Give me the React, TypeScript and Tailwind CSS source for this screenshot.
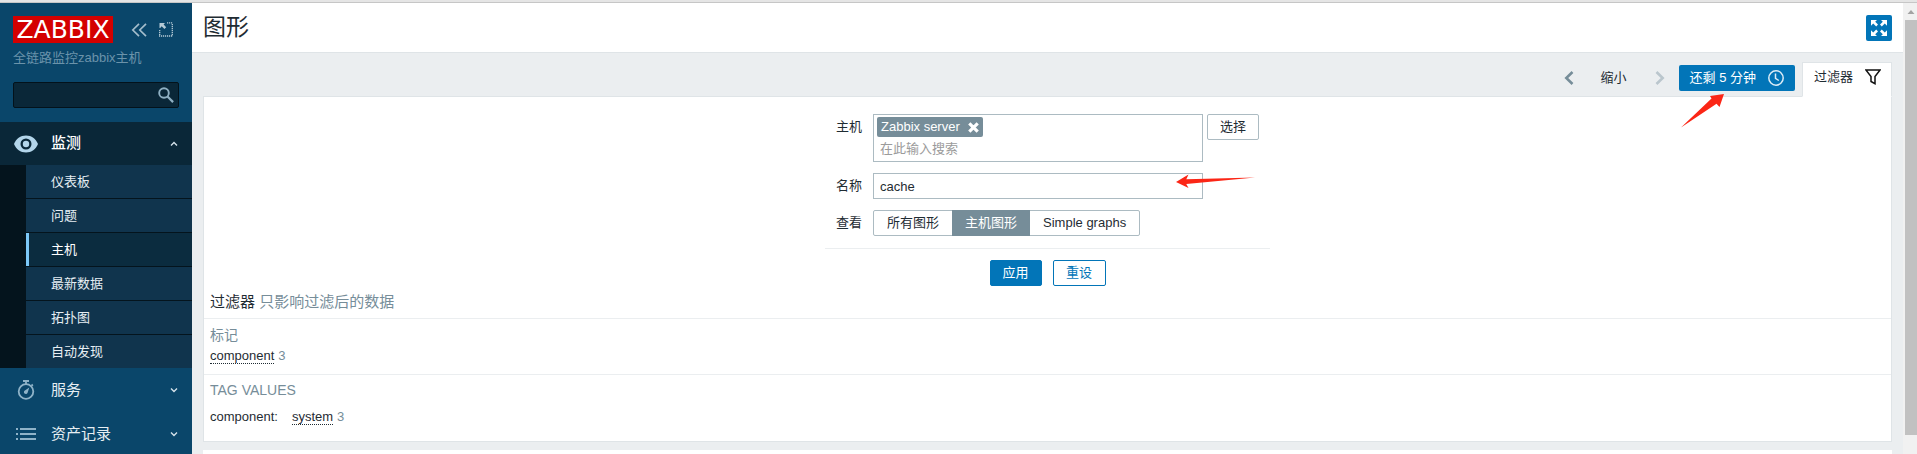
import React, { useState } from "react";

const subItems = ["仪表板", "问题", "主机", "最新数据", "拓扑图", "自动发现"];
const views = ["所有图形", "主机图形", "Simple graphs"];

function Chevron({ up = false }: { up?: boolean }) {
  return (
    <svg className="ml-auto h-2 w-2 shrink-0" viewBox="0 0 8 8" fill="none" stroke="#d5e2ea" strokeWidth="1.4">
      <path d={up ? "M1 5.6 4 2.6 7 5.6" : "M1 2.6 4 5.6 7 2.6"} />
    </svg>
  );
}

function MenuItem({ icon, label }: { icon: React.ReactNode; label: string }) {
  return (
    <li>
      <a href="#" className="flex h-11 items-center pr-[14px] text-[15px] text-[#e6eef3]">
        <span className="flex w-[51px] shrink-0 justify-center">{icon}</span>
        {label}
        <Chevron />
      </a>
    </li>
  );
}

function Sidebar() {
  return (
    <aside className="flex w-48 shrink-0 flex-col overflow-hidden bg-[#0a466a]">
      <div className="flex shrink-0 items-start px-[13px] pt-[13px]">
        <a href="#" className="flex h-[27px] w-[100px] items-center justify-center bg-[#d40000] font-[DejaVu_Sans,sans-serif] text-[25px] leading-none text-white">
          ZABBIX
        </a>
        <button aria-label="收起侧边栏" className="mt-[7px] ml-[18px]">
          <svg className="h-[14px] w-4" viewBox="0 0 16 14" fill="none" stroke="#a3bccb" strokeWidth="1.7">
            <path d="M8 .8 1.8 7 8 13.2M15 .8 8.8 7l6.2 6.2" />
          </svg>
        </button>
        <button aria-label="隐藏侧边栏" className="mt-[6px] ml-[12px]">
          <svg className="h-[15px] w-[14px]" viewBox="0 0 14 15" fill="none">
            <path d="M8 .9H14M13.300 2v12M0 14h14M.7 13V8" stroke="#b5cad6" strokeWidth="1.3" strokeDasharray="1.2 .8" />
            <path d="M.5 1h5.500L4.600 2.500 7.200 5.200 5.400 7 2.700 4.300 1.200 6 .5 6z" fill="#b5cad6" />
          </svg>
        </button>
      </div>
      <div className="mt-[5px] shrink-0 px-[13px] text-[13px] leading-5 text-[#6b93aa]">全链路监控zabbix主机</div>
      <form className="mx-[13px] mt-[14px] flex h-[26px] shrink-0 items-center rounded-[2px] border border-[#03121b] bg-[#0a2738] pr-1">
        <input type="text" aria-label="搜索" className="min-w-0 flex-1 bg-transparent px-1 text-[13px] text-white outline-none" />
        <button aria-label="搜索" type="button">
          <svg className="h-4 w-4" viewBox="0 0 16 16" fill="none" stroke="#8fb0c3">
            <circle cx="6" cy="6" r="4.800" strokeWidth="1.900" />
            <path d="m9.500 9.500 5.600 5.600" strokeWidth="2.200" />
          </svg>
        </button>
      </form>
      <ul className="mt-[14px]">
        <li>
          <a href="#" className="flex h-[43px] items-center bg-[#0a2738] pr-[14px] text-[15px] font-medium text-white">
            <span className="flex w-[51px] shrink-0 pl-[14px]">
              <svg className="h-[18px] w-6" viewBox="0 0 24 18">
                <path fillRule="evenodd" fill="#b3d5ea" d="M12 .5C6.500.5 2 3.900 0 9c2 5.100 6.500 8.500 12 8.500S22 14.100 24 9C22 3.900 17.500.5 12 .5Zm0 14A5.500 5.500 0 1 1 12 3.500a5.500 5.500 0 0 1 0 11Z" />
                <circle cx="12" cy="9" r="3.200" fill="#b3d5ea" />
              </svg>
            </span>
            监测
            <Chevron up />
          </a>
          <ul className="flex flex-col gap-px bg-[#04141d] pl-[26px]">
            {subItems.map((s) => (
              <li key={s}>
                <a
                  href="#"
                  className={
                    "flex h-[33px] items-center pl-[22px] text-[13px] " +
                    (s === "主机"
                      ? "border-l-[3px] border-[#7cc8f8] bg-[#0b2c3f] text-white"
                      : "border-l-[3px] border-[#10344d] bg-[#10344d] text-[#e6eef3]")
                  }
                >
                  {s}
                </a>
              </li>
            ))}
          </ul>
        </li>
        <MenuItem
          label="服务"
          icon={
            <svg className="h-5 w-[18px]" viewBox="0 0 18 20" fill="none" stroke="#8fb3c8">
              <circle cx="9" cy="11.500" r="7.300" strokeWidth="1.800" />
              <path d="M6 1h6M9 1v3M14.500 4.500l1.300 1.300" strokeWidth="1.800" />
              <path d="M12.300 7.600 10.600 12.800a1.900 1.900 0 1 1-2.700-2.300Z" fill="#8fb3c8" stroke="none" />
            </svg>
          }
        />
        <MenuItem
          label="资产记录"
          icon={
            <svg className="h-3 w-5" viewBox="0 0 20 12" fill="#8fb3c8">
              <path d="M0 0h2v2H0zM4 0h16v2H4zM0 5h2v2H0zM4 5h16v2H4zM0 10h2v2H0zM4 10h16v2H4z" />
            </svg>
          }
        />
      </ul>
    </aside>
  );
}

function PageHeader() {
  return (
    <header className="flex h-[50px] shrink-0 items-center justify-between border-b border-[#dfe4e7] bg-white px-[11px]">
      <h1 className="text-[23px] leading-none">图形</h1>
      <button aria-label="全屏" className="flex h-[26px] w-[26px] items-center justify-center rounded-[2px] bg-[#0275b8]">
        <svg className="h-4 w-4" viewBox="0 0 16 16" fill="#fff">
          <path d="M0 0h6L4.200 1.800 7 4.600 5.200 6.400 2.200 3.600 0 5.800z" />
          <path d="M16 0h-6l1.800 1.800L9 4.600l1.800 1.800 3-2.800L16 5.800z" />
          <path d="M0 16h6l-1.800-1.800L7 11.400 5.200 9.600l-3 2.800L0 10.200z" />
          <path d="M16 16h-6l1.800-1.800L9 11.400l1.800-1.800 3 2.800 2.200-2.200z" />
        </svg>
      </button>
    </header>
  );
}

function TimeBar() {
  return (
    <div className="flex items-end justify-end pt-[9px]">
      <div className="mb-[5px] flex items-center">
        <button aria-label="后退">
          <svg className="h-[14px] w-[10px]" viewBox="0 0 10 14" fill="none" stroke="#768d99" strokeWidth="2.600">
            <path d="M8.500 1 2.300 7l6.200 6" />
          </svg>
        </button>
        <button className="ml-[27px] text-[13px]">缩小</button>
        <button aria-label="前进" className="ml-7">
          <svg className="h-[14px] w-[10px]" viewBox="0 0 10 14" fill="none" stroke="#bac6cd" strokeWidth="2.600">
            <path d="M1.500 1 7.700 7l-6.200 6" />
          </svg>
        </button>
        <div className="relative ml-[14px]">
          <button className="flex h-[26px] items-center gap-3 rounded-[2px] bg-[#0275b8] px-[11px] text-[13px] text-white">
            还剩 5 分钟
            <svg className="h-4 w-4" viewBox="0 0 16 16" fill="none" stroke="#dcecf6" strokeWidth="1.500">
              <circle cx="8" cy="8" r="7.200" />
              <path d="M7.500 3.500V8.300l3.300 2.200" />
            </svg>
          </button>
          <svg className="pointer-events-none absolute top-[29px] left-[2px] h-[34px] w-11" viewBox="0 0 44 34" fill="#fb2616">
            <path d="M0 33.500 30.500 4.600 29 2 43 0 38.500 13 35.500 9.800Z" />
          </svg>
        </div>
      </div>
      <button className="relative -mb-px ml-[7px] flex h-[35px] items-center gap-3 border border-[#dfe4e7] border-b-white bg-white pr-[10px] pb-[6px] pl-[11px] text-[13px]">
        过滤器
        <svg className="h-4 w-4" viewBox="0 0 16 16" fill="none" stroke="#111" strokeWidth="1.500">
          <path d="M.9 1h14.200L10 7.500v7.200L6 12.500V7.500Z" />
        </svg>
      </button>
    </div>
  );
}

function FilterForm() {
  const [view, setView] = useState("主机图形");
  const label = "w-[37px] shrink-0 text-right leading-[26px]";
  return (
    <form className="mx-auto w-[445px] text-[13px]">
      <div className="flex flex-col gap-[11px] border-b border-[#ebeef0] pt-[17px] pb-3">
        <div className="flex items-start gap-[11px]">
          <label htmlFor="host" className={label}>主机</label>
          <div className="flex gap-1">
            <div className="h-12 w-[330px] border border-[#acbbc2] px-[3px] pt-[2px]">
              <span className="flex h-5 w-max items-center gap-2 rounded-[2px] bg-[#768d99] px-1 text-white">
                Zabbix server
                <button type="button" aria-label="移除">
                  <svg className="h-[11px] w-[11px]" viewBox="0 0 11 11" stroke="#fff" strokeWidth="3.200">
                    <path d="m1.300 1.300 8.400 8.400M9.700 1.300 1.300 9.700" />
                  </svg>
                </button>
              </span>
              <input id="host" type="text" placeholder="在此输入搜索" className="block h-[22px] w-full px-[3px] outline-none placeholder:text-[#9b9b9b]" />
            </div>
            <button type="button" className="h-[26px] w-[52px] rounded-[2px] border border-[#acbbc2] bg-white">选择</button>
          </div>
        </div>
        <div className="flex gap-[11px]">
          <label htmlFor="name" className={label}>名称</label>
          <div className="relative">
            <input id="name" type="text" defaultValue="cache" className="block h-[26px] w-[330px] border border-[#acbbc2] px-[6px] outline-none" />
            <svg className="pointer-events-none absolute top-px left-[303px] h-[14px] w-20" viewBox="0 0 80 14" fill="#fb2616">
              <path d="M0 8 12.500.6 10.300 5.200 79 3.500 10.300 10 12.500 14Z" />
            </svg>
          </div>
        </div>
        <div className="flex gap-[11px]" role="group" aria-label="查看">
          <span className={label}>查看</span>
          <div className="flex h-[26px] items-stretch rounded-[2px] border border-[#acbbc2]">
            {views.map((v) => (
              <label
                key={v}
                className={
                  "flex items-center px-[13px] " + (v === view ? "-my-px bg-[#768d99] text-white" : "")
                }
              >
                <input type="radio" name="view" checked={v === view} onChange={() => setView(v)} className="sr-only" />
                {v}
              </label>
            ))}
          </div>
        </div>
      </div>
      <div className="flex justify-center gap-[11px] pt-[11px]">
        <button type="button" className="h-[26px] w-[52px] rounded-[2px] border border-[#0275b8] bg-[#0275b8] text-white">应用</button>
        <button type="reset" className="h-[26px] w-[53px] rounded-[2px] border border-[#0275b8] bg-white text-[#0275b8]">重设</button>
      </div>
    </form>
  );
}

function Tag({ name, count }: { name: string; count: number }) {
  return (
    <span className="flex gap-1 leading-[15px] text-[#768d99]">
      <a href="#" className="border-b border-dotted border-[#1f2c33] text-[#1f2c33]">{name}</a>
      {count}
    </span>
  );
}

function Subfilter() {
  return (
    <section className="text-[13px]">
      <h3 className="px-[6px] pt-[5px] pb-[5px] text-[15px] leading-[22px]">
        过滤器 <span className="text-[#768d99]">只影响过滤后的数据</span>
      </h3>
      <div className="border-t border-[#ebeef0] px-[6px] pt-[6px] pb-[10px]">
        <h4 className="text-[14px] leading-5 text-[#768d99]">标记</h4>
        <div className="mt-[3px] flex"><Tag name="component" count={3} /></div>
      </div>
      <div className="border-t border-[#ebeef0] px-[6px] pt-[5px] pb-4">
        <h4 className="text-[14px] leading-5 text-[#768d99]">TAG VALUES</h4>
        <div className="mt-[9px] flex gap-[14px]">
          <span className="leading-[15px]">component:</span>
          <Tag name="system" count={3} />
        </div>
      </div>
    </section>
  );
}

export default function App() {
  return (
    <div className="flex h-screen flex-col overflow-hidden bg-[#ebeef0] font-[Liberation_Sans,Noto_Sans_CJK_SC,sans-serif] text-[#1f2c33]">
      <div className="h-[3px] shrink-0 border-b border-[#c6c6c6] bg-[#e5e5e5]" />
      <div className="flex min-h-0 flex-1">
        <Sidebar />
        <div className="flex min-w-0 flex-1 flex-col">
          <PageHeader />
          <main className="min-h-0 flex-1 overflow-hidden px-[11px]">
            <TimeBar />
            <div className="border border-[#dfe4e7] bg-white">
              <FilterForm />
              <Subfilter />
            </div>
            <div className="mt-2 h-10 bg-white" />
          </main>
        </div>
        <div className="flex w-[14px] shrink-0 flex-col bg-[#f1f1f1] pb-[19px] pl-[2px]" aria-hidden="true">
          <svg className="h-[17px] w-3 shrink-0" viewBox="0 0 12 17" fill="#a3a3a3">
            <path d="M2.500 11 6 7l3.500 4z" />
          </svg>
          <div className="flex-1 bg-[#c1c1c1]" />
        </div>
      </div>
    </div>
  );
}
